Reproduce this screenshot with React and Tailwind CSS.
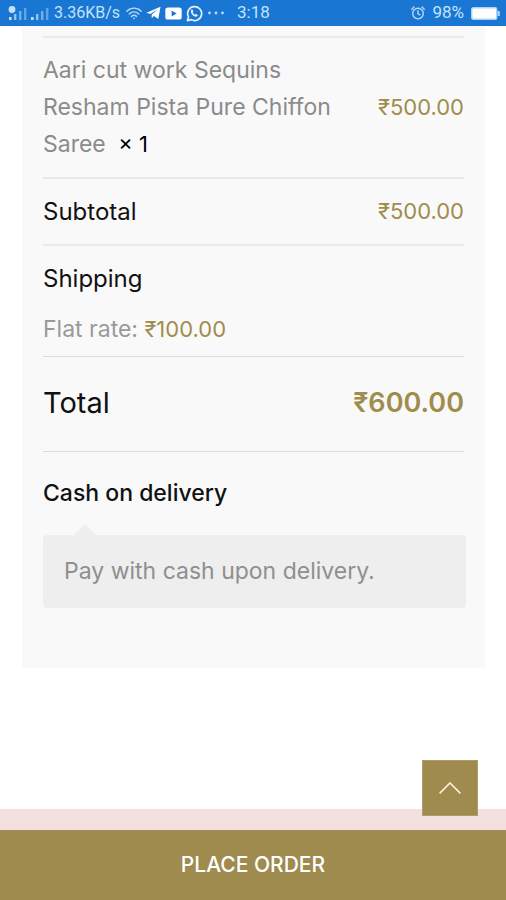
import React from 'react';

const item = {
  name: 'Aari cut work Sequins Resham Pista Pure Chiffon Saree',
  quantity: 1,
  price: '₹500.00',
};

function SignalIcon({ roaming }) {
  return (
    <svg viewBox="0 0 20 16" className="h-4 w-5" fill="#8fc4f3" aria-hidden="true">
      {roaming ? <circle cx="4" cy="4.500" r="3.400" fill="#c2e0fa" /> : null}
      <rect x="1" y="12" width="2.6" height="3" fill="#c2e0fa" />
      <rect x="6" y="9" width="2.4" height="6" />
      <rect x="11" y="6" width="2.4" height="9" opacity=".75" />
      <rect x="16" y="3" width="2.4" height="12" opacity=".6" />
    </svg>
  );
}

function WifiIcon() {
  return (
    <svg viewBox="0 0 18 16" className="h-4 w-4" fill="none" stroke="#b5d9f8" strokeWidth="1.6" strokeLinecap="round" aria-hidden="true">
      <path d="M1 6C5.5 1.4 12.500 1.400 17 6" />
      <path d="M3.600 9C6.600 6 11.400 6 14.400 9" />
      <path d="M6.200 11.800c1.600-1.600 4-1.600 5.600 0" />
      <circle cx="9" cy="14" r="1" fill="#b5d9f8" stroke="none" />
    </svg>
  );
}

function TelegramIcon() {
  return (
    <svg viewBox="0 0 15 14" className="h-[14px] w-[15px]" fill="#fff" aria-hidden="true">
      <path d="M14.500.8 12.300 13 7.900 10 5.800 12.200 5.600 8.800 11.500 3.600 4.200 8 .4 6.700z" />
    </svg>
  );
}

function YoutubeIcon() {
  return (
    <svg viewBox="0 0 17 13" className="h-[13px] w-[17px]" aria-hidden="true">
      <rect x=".3" y=".5" width="16.400" height="12" rx="2.600" fill="#fff" />
      <path d="M6.600 3.600v5.800L11.600 6.500z" fill="#1976d2" />
    </svg>
  );
}

function WhatsappIcon() {
  return (
    <svg viewBox="0 0 17 17" className="h-[17px] w-[17px]" fill="none" stroke="#e3f1fd" strokeWidth="1.700" aria-hidden="true">
      <path d="M1.400 15.600 2.500 11.900A7 7 0 1 1 5.100 14.600z" strokeLinejoin="round" />
      <path d="M5.400 4.800c.5-.5 1.100-.4 1.400.3l.5 1.100c.2.500-.5 1-.6 1.300.4 1 1.200 1.700 2.200 2.200.4-.1.800-.9 1.300-.7l1.300.7c.5.3.3 1-.2 1.500-1 .8-2.300.5-3.600-.3C6.200 9.900 5.200 8.500 4.900 7c-.2-.9 0-1.700.5-2.200z" fill="#e3f1fd" stroke="none" />
    </svg>
  );
}

function AlarmIcon() {
  return (
    <svg viewBox="0 0 14 14" className="h-[14px] w-[14px]" fill="none" stroke="#b5d9f8" strokeWidth="1.400" strokeLinecap="round" aria-hidden="true">
      <circle cx="7" cy="7.600" r="5.300" />
      <path d="M7 4.800v3l2 1M.8 3.200 3 1M13.200 3.200 11 1" />
    </svg>
  );
}

function BatteryIcon() {
  return (
    <svg viewBox="0 0 29 13" className="h-[13px] w-[29px]" aria-hidden="true">
      <rect x=".7" y=".7" width="25" height="11.600" rx="1.500" fill="#fff" stroke="#a9d4f8" strokeWidth="1.400" />
      <rect x="26.500" y="4" width="2.300" height="5" rx=".6" fill="#a9d4f8" />
    </svg>
  );
}

function StatusBar() {
  return (
    <header className="flex h-[26px] shrink-0 items-center justify-between bg-[#1976d2] pr-1.5 pl-2 font-['Roboto',sans-serif] text-[17px] text-[#c5e2fb]">
      <div className="flex items-center">
        <SignalIcon roaming />
        <div className="ml-0.5">
          <SignalIcon />
        </div>
        <span className="ml-1 text-base">3.36KB/s</span>
        <div className="ml-1.5 flex items-center gap-1">
          <WifiIcon />
          <TelegramIcon />
          <YoutubeIcon />
          <WhatsappIcon />
        </div>
        <svg viewBox="0 0 18 4" className="ml-1 h-1 w-[18px]" fill="#b5d9f8" aria-hidden="true">
          <circle cx="2.500" cy="2" r="1.400" />
          <circle cx="9" cy="2" r="1.400" />
          <circle cx="15.500" cy="2" r="1.400" />
        </svg>
        <span className="ml-3">3:18</span>
      </div>
      <div className="flex items-center gap-[7px]">
        <AlarmIcon />
        <span>98%</span>
        <BatteryIcon />
      </div>
    </header>
  );
}

function OrderTable() {
  return (
    <table className="w-full border-separate border-spacing-0 text-left">
      <tbody>
        <tr>
          <td className="border-t-2 border-[#e9e9e9] py-3.5 pr-2 text-[#8b8b8b]">
            {item.name}{' '}
            <span className="ml-1.5 inline-block text-[22px] text-black">{`× ${item.quantity}`}</span>
          </td>
          <td className="border-t-2 border-[#e9e9e9] py-3.5 text-right text-[22px] text-[#a08c4d]">{item.price}</td>
        </tr>
        <tr>
          <th scope="row" className="border-t-2 border-[#e9e9e9] py-3.5 text-2xl/[37px] font-normal text-[#111]">Subtotal</th>
          <td className="border-t-2 border-[#e9e9e9] py-3.5 text-right text-[22px] text-[#a08c4d]">{item.price}</td>
        </tr>
        <tr>
          <td colSpan={2} className="border-t-2 border-[#e9e9e9] pt-3.5 pb-2">
            <p className="text-2xl/[37px] text-[#111]">Shipping</p>
            <p className="mt-3.5 text-[#999]">
              Flat rate: <span className="text-[22px] text-[#a08c4d]">₹100.00</span>
            </p>
          </td>
        </tr>
        <tr>
          <th scope="row" className="border-y border-[#dcdcdc] pt-[27px] pb-[30px] text-[29px] font-normal text-[#111]">Total</th>
          <td className="border-y border-[#dcdcdc] pt-[27px] pb-[30px] text-right text-[27px] font-semibold text-[#a08c4d]">₹600.00</td>
        </tr>
      </tbody>
    </table>
  );
}

export default function App() {
  return (
    <div className="flex min-h-screen flex-col bg-white font-['Inter',sans-serif]">
      <StatusBar />

      <main className="mr-[21px] ml-[22px] bg-[#f9f9f9] px-[21px] pt-2.5 pb-[60px] text-[23px] leading-[37px]">
        <OrderTable />
        <section>
          <h2 className="mt-[23px] font-medium text-[#111]">Cash on delivery</h2>
          <div className="relative mt-[23px] -mr-0.5 rounded bg-[#eee] px-[21px] py-[18px] text-[#8f8f8f]">
            <svg viewBox="0 0 22 11" className="absolute bottom-full left-[31px] h-[11px] w-[22px]" fill="#eee" aria-hidden="true">
              <path d="M0 11 11 0l11 11z" />
            </svg>
            <p>Pay with cash upon delivery.</p>
          </div>
        </section>
      </main>

      <footer className="relative mt-auto bg-[#f3e0df] pt-[21px]">
        <button
          type="button"
          aria-label="Back to top"
          className="absolute right-7 bottom-[84px] flex h-14 w-14 items-center justify-center border border-[#ad9d66] bg-[#9e8b4d]"
        >
          <svg viewBox="0 0 22 12" className="h-3 w-[22px]" fill="none" stroke="#fdf6dc" strokeWidth="1.500" aria-hidden="true">
            <path d="M.6 11.400 11 1l10.400 10.400" />
          </svg>
        </button>
        <button type="button" className="h-[70px] w-full bg-[#9e8b4d] text-[21px] font-medium text-white">
          PLACE ORDER
        </button>
      </footer>
    </div>
  );
}
